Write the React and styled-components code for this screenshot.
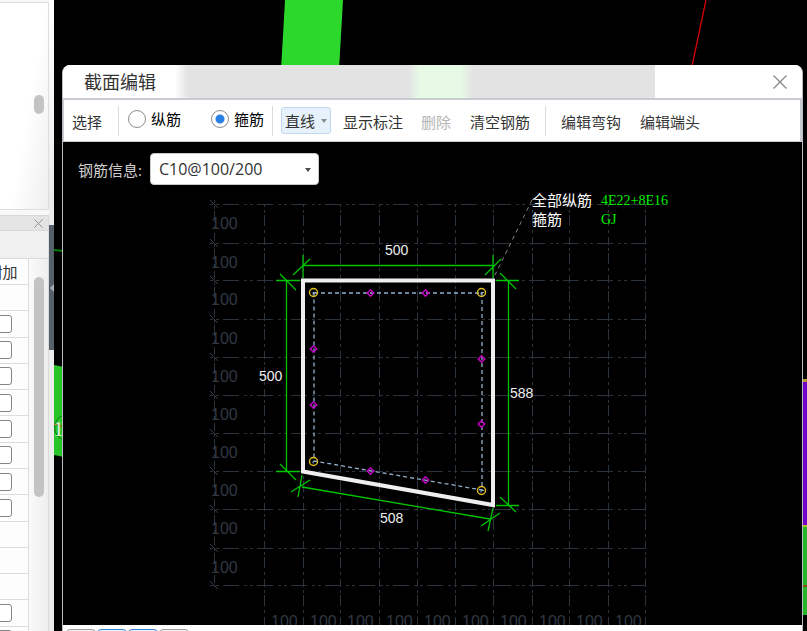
import React, { useState } from 'react';
import { styled, createGlobalStyle } from 'styled-components';

const STEPS = [0, 1, 2, 3, 4, 5, 6, 7, 8, 9, 10];
const GRID_X = [264, 303, 340, 379, 417, 455, 493, 532, 569, 608, 645];
const GRID_Y = [204, 243, 280, 319, 357, 395, 433, 471, 509, 548, 585];

const CORNER_BARS = [
  [313, 292],
  [481, 292],
  [481, 490],
  [313, 461],
];

const SIDE_BARS = [
  [370, 293],
  [425, 293],
  [313, 349],
  [313, 405],
  [481, 359],
  [481, 424],
  [370, 471],
  [425, 480],
];

// true = the row has a tick box
const ROWS = [
  false, true, true, true, true, true, true, true, true,
  false, false, false, true, true,
];

const SidePanel = () => (
  <Side>
    <SideContent>
      <UpperDock>
        <Thumb $top={92} $height={19} />
      </UpperDock>
      <DockHeader>
        <DockClose type="button" aria-label="关闭面板">
          <CrossIcon size={9} />
        </DockClose>
      </DockHeader>
      <DockToolbar />
      <DockBody>
        <TableClip>
          <PropTable>
            <thead>
              <tr>
                <th>附加</th>
              </tr>
            </thead>
            <tbody>
              {ROWS.map((hasBox, index) => (
                <tr key={index}>
                  <td>{hasBox && <CheckBox type="checkbox" aria-label="附加" />}</td>
                </tr>
              ))}
            </tbody>
          </PropTable>
        </TableClip>
        <Track>
          <Thumb $top={18} $height={220} />
        </Track>
      </DockBody>
    </SideContent>
    <Splitter>
      <SplitterHandle type="button" aria-label="收起">
        <svg width="4" height="8" viewBox="0 0 4 8">
          <path d="M4 0v8L0 4z" fill="#a9afb5" />
        </svg>
      </SplitterHandle>
    </Splitter>
  </Side>
);

const CrossIcon = ({ size }) => (
  <svg width={size} height={size} viewBox="0 0 14 14">
    <path d="M0.5 0.5l13 13M13.5 0.5l-13 13" stroke="#8a8a8a" strokeWidth="1.4" fill="none" />
  </svg>
);

const ModelView = () => (
  <Drawing aria-hidden="true">
    <path d="M231 0H289L285 70H227z" fill="#2bd82b" />
    <path d="M652 0L638 66" stroke="#d80000" strokeWidth="1.3" />
    <path d="M0 250L10 251" stroke="#007c00" strokeWidth="2" />
    <path d="M0 365L10 367V457L0 455z" fill="#28c428" />
    <path d="M10 415A13 13 0 0 0 10 440" stroke="#0a7a0a" fill="none" />
    <path d="M0 424L10 427" stroke="#c43a10" />
    <text x="-1" y="436" fill="#d8ecd8" fontFamily="Liberation Serif, serif" fontSize="22">
      1
    </text>
    <path d="M749 379h10v3h-10z" fill="#b89a20" />
    <path d="M749 382h10v143h-10z" fill="#7200cc" />
    <path d="M749 525h10v2h-10z" fill="#b4c820" />
    <path d="M749 527h10v88h-10z" fill="#28b428" />
    <path d="M749 585h10v2h-10z" fill="#8a4a10" />
  </Drawing>
);

const SectionDrawing = () => (
  <Drawing>
    <g transform="translate(-63 -142)">
      <g stroke="#2b333d" fill="none" shapeRendering="crispEdges">
        <g strokeDasharray="16 5 3 3 3 4" strokeDashoffset="19">
          {GRID_Y.map((y) => (
            <path key={y} d={`M208 ${y}.5H646`} />
          ))}
        </g>
        <g strokeDasharray="11 4 3 4 8 3 3 2" strokeDashoffset="27">
          {GRID_X.map((x) => (
            <path key={x} d={`M${x}.5 204V625`} />
          ))}
          <path d="M214.5 200V587" />
        </g>
      </g>
      <g stroke="#36404c" fill="none">
        {GRID_Y.map((y) => (
          <path key={y} d={`M210 ${y - 4}l8 8`} />
        ))}
      </g>
      <g fill="#303843" fontFamily="Liberation Sans, Arial, sans-serif" fontSize="16">
        {STEPS.slice(0, 10).map((i) => (
          <React.Fragment key={i}>
            <text x="211" y={GRID_Y[i] + 25}>100</text>
            <text x={GRID_X[i] + 7} y="627">100</text>
          </React.Fragment>
        ))}
      </g>

      <path d="M532 200L494 277" stroke="#858585" strokeDasharray="4 4" fill="none" />
      <path d="M303 280.5H493V505L303 471.5z" stroke="#f0eeee" strokeWidth="4" fill="none" />
      <path d="M314 293H482V490L314 461z" stroke="#90b0cc" strokeWidth="1.3" strokeDasharray="4 3" fill="none" />

      <g stroke="#00c400" strokeWidth="1.3" fill="none">
        <path d="M303 265.5H493M286.5 281V471M508.5 281V505M302 487L490 519" />
        <path d="M303 255V278M293 275L310 259M493 255V278M485 275L501 259" />
        <path d="M276 280.5H300M280 274L296 290M276 471.5H300M280 464L296 480" />
        <path d="M496 280.5H519M500 273L516 289M496 505.5H519M500 497L516 512" />
        <path d="M302 475L298 497M291 492L310 480M493 508L488 531M481 526L500 513" />
      </g>

      <g stroke="#e0c020" strokeWidth="1.4" fill="none">
        {CORNER_BARS.map(([x, y]) => (
          <circle key={`${x}-${y}`} cx={x + 0.5} cy={y + 0.5} r="4" />
        ))}
      </g>
      <g stroke="#90b0cc" fill="none">
        {CORNER_BARS.map(([x, y]) => (
          <path key={`${x}-${y}`} d={`M${x} ${y + 2.5}v-2h3`} />
        ))}
      </g>
      <g stroke="#c800c8" strokeWidth="1.4" fill="none">
        {SIDE_BARS.map(([x, y]) => (
          <path key={`${x}-${y}`} d={`M${x + 0.5} ${y - 3.3}l3.3 3.3l-3.3 3.3l-3.3 -3.3z`} />
        ))}
      </g>

      <g fill="#eeeeee" fontFamily="Liberation Sans, Arial, sans-serif" fontSize="14">
        <text x="385" y="255">500</text>
        <text x="259" y="381">500</text>
        <text x="510" y="398">588</text>
        <text x="380" y="523">508</text>
      </g>
      <g fill="#ffffff" fontFamily="Noto Sans CJK SC, sans-serif" fontSize="15">
        <text x="532" y="206">全部纵筋</text>
        <text x="532" y="225">箍筋</text>
      </g>
      <g fill="#00f000" fontFamily="Liberation Serif, serif" fontSize="14">
        <text x="601" y="205">4E22+8E16</text>
        <text x="601" y="224">GJ</text>
      </g>
    </g>
  </Drawing>
);

const SectionEditor = () => {
  const [barType, setBarType] = useState('stirrup');

  return (
    <Window>
      <TitleBar>
        <Title>截面编辑</Title>
        <CloseButton type="button" aria-label="关闭">
          <CrossIcon size={14} />
        </CloseButton>
      </TitleBar>

      <Toolbar>
        <ToolButton type="button">选择</ToolButton>
        <Divider $left={16} $right={9} />
        <RadioLabel>
          <Radio
            type="radio"
            name="barType"
            checked={barType === 'main'}
            onChange={() => setBarType('main')}
          />
          纵筋
        </RadioLabel>
        <RadioLabel $left={30}>
          <Radio
            type="radio"
            name="barType"
            checked={barType === 'stirrup'}
            onChange={() => setBarType('stirrup')}
          />
          箍筋
        </RadioLabel>
        <Divider $left={8} $right={8} />
        <MenuButton type="button">
          直线
          <svg width="6" height="4" viewBox="0 0 6 4">
            <path d="M0 0h6L3 4z" fill="#8c8c8c" />
          </svg>
        </MenuButton>
        <ToolButton type="button" $left={12}>显示标注</ToolButton>
        <ToolButton type="button" $left={18} disabled>删除</ToolButton>
        <ToolButton type="button" $left={19}>清空钢筋</ToolButton>
        <Divider $left={15} $right={15} />
        <ToolButton type="button">编辑弯钩</ToolButton>
        <ToolButton type="button" $left={19}>编辑端头</ToolButton>
      </Toolbar>

      <Canvas>
        <SectionDrawing />
        <InfoForm>
          <label htmlFor="barInfo">钢筋信息:</label>
          <SelectWrap>
            <Select id="barInfo" defaultValue="C10@100/200">
              <option>C10@100/200</option>
            </Select>
            <svg width="6" height="4" viewBox="0 0 6 4">
              <path d="M0 0h6L3 4z" fill="#4a4a4a" />
            </svg>
          </SelectWrap>
        </InfoForm>
      </Canvas>

      <StatusBar>
        <StatusButton type="button" aria-label="动态输入" />
        <StatusButton type="button" aria-label="正交" $active />
        <StatusButton type="button" aria-label="对象捕捉" $active />
        <StatusButton type="button" aria-label="极轴" />
      </StatusBar>
    </Window>
  );
};

const App = () => (
  <>
    <GlobalStyle />
    <Page>
      <SidePanel />
      <Desktop>
        <ModelView />
        <SectionEditor />
      </Desktop>
    </Page>
  </>
);

export default App;

const GlobalStyle = createGlobalStyle`
  * {
    box-sizing: border-box;
  }

  body {
    margin: 0;
    overflow: hidden;
    font-family: 'Open Sans', 'Noto Sans CJK SC', sans-serif;
    font-size: 15px;
    color: #333;
  }

  button {
    padding: 0;
    border: none;
    background: none;
    font: inherit;
    color: inherit;
  }
`;

const Page = styled.div`
  display: flex;
  height: 100vh;
  background: #000;
`;

const Side = styled.aside`
  display: flex;
  flex: none;
  width: 54px;
  background: #f8f8f8;
`;

const SideContent = styled.div`
  display: flex;
  flex-direction: column;
  flex: 1;
  min-width: 0;
  padding-top: 2px;
`;

const UpperDock = styled.div`
  display: flex;
  justify-content: flex-end;
  flex: none;
  height: 208px;
  padding-right: 4px;
  border: solid #dedede;
  border-width: 1px 1px 1px 0;
  background: linear-gradient(100deg, #fff 55%, #efefef);
`;

const Thumb = styled.div`
  width: 10px;
  height: ${({ $height }) => $height}px;
  margin-top: ${({ $top }) => $top}px;
  border-radius: 5px;
  background: #c3c3c3;
`;

const DockHeader = styled.div`
  display: flex;
  align-items: center;
  justify-content: flex-end;
  flex: none;
  height: 16px;
  margin-top: 5px;
  padding-right: 5px;
  border: solid #d8d8d8;
  border-width: 1px 1px 1px 0;
  background: #e4e4e4;
`;

const DockClose = styled.button`
  display: flex;
`;

const DockToolbar = styled.div`
  flex: none;
  height: 28px;
  border-right: 1px solid #dedede;
  border-bottom: 1px solid #dcdcdc;
  background: #f0f0f0;
`;

const DockBody = styled.div`
  display: flex;
  flex: 1;
  min-height: 0;
  overflow: hidden;
`;

const TableClip = styled.div`
  display: flex;
  justify-content: flex-end;
  align-items: flex-start;
  flex: 1;
  min-width: 0;
  overflow: hidden;
`;

const PropTable = styled.table`
  flex: none;
  width: 52px;
  height: 394px;
  border-collapse: separate;
  border-spacing: 0;
  background: #fdfdfd;

  th,
  td {
    height: 26px;
    padding: 0;
    border-right: 1px solid #dcdcdc;
    border-bottom: 1px solid #dcdcdc;
    font-size: 15px;
    font-weight: 400;
    line-height: 20px;
    text-align: center;
    white-space: nowrap;
  }
`;

const CheckBox = styled.input`
  appearance: none;
  display: block;
  width: 18px;
  height: 18px;
  margin: 0 auto;
  border: 1px solid #858585;
  border-radius: 3px;
  background: #fff;
`;

const Track = styled.div`
  display: flex;
  justify-content: flex-end;
  align-items: flex-start;
  flex: none;
  width: 20px;
  padding-right: 4px;
  border-right: 1px solid #dadada;
  background: linear-gradient(90deg, #fafafa, #eeeeee);
`;

const Splitter = styled.div`
  flex: none;
  width: 5px;
  padding-top: 225px;
  background: linear-gradient(#fff, #ececec 30%);
`;

const SplitterHandle = styled.button`
  display: flex;
  align-items: center;
  justify-content: flex-end;
  width: 5px;
  height: 125px;
  background: #56606b;
`;

const Desktop = styled.main`
  position: relative;
  flex: 1;
  min-width: 0;
  overflow: hidden;
  background: #000;
`;

const Drawing = styled.svg`
  position: absolute;
  inset: 0;
  width: 100%;
  height: 100%;
`;

const Window = styled.section`
  position: absolute;
  top: 65px;
  right: 4px;
  bottom: -30px;
  left: 8px;
  display: flex;
  flex-direction: column;
  overflow: hidden;
  border: solid #b9bcc0;
  border-width: 0 1px 0 1px;
  border-radius: 8px 8px 0 0;
  background: #fff;
`;

const TitleBar = styled.header`
  display: flex;
  align-items: center;
  justify-content: space-between;
  flex: none;
  height: 35px;
  padding: 0 15px 0 21px;
  border-bottom: 2px solid #c8ccd1;
  background: linear-gradient(
    90deg,
    #fff 112px,
    #e3e3e3 125px,
    #e3e3e3 346px,
    #e6fae6 357px,
    #e6fae6 398px,
    #e3e3e3 410px,
    #e3e3e3 592px,
    #fff 592px
  );
`;

const Title = styled.h1`
  margin: 0;
  font-size: 18px;
  font-weight: 400;
  line-height: 24px;
`;

const CloseButton = styled.button`
  display: flex;
`;

const Toolbar = styled.div`
  display: flex;
  align-items: center;
  flex: none;
  height: 42px;
  padding-left: 8px;
  border: solid #c8ccd1;
  border-width: 0 2px 1px 1px;
  white-space: nowrap;
`;

const ToolButton = styled.button`
  margin-left: ${({ $left = 0 }) => $left}px;
  padding-top: 2px;
  line-height: 20px;

  &:disabled {
    color: #b4b4b4;
  }
`;

const Divider = styled.span`
  width: 1px;
  height: 30px;
  margin: 0 ${({ $right }) => $right}px 0 ${({ $left }) => $left}px;
  background: #dcdcdc;
`;

const RadioLabel = styled.label`
  display: flex;
  align-items: center;
  gap: 5px;
  margin-left: ${({ $left = 0 }) => $left}px;
  padding-bottom: 3px;
  line-height: 20px;
  color: #000;
`;

const Radio = styled.input`
  appearance: none;
  width: 18px;
  height: 18px;
  margin: 0;
  border: 1px solid #8c8c8c;
  border-radius: 50%;
  background: #fff;

  &:checked {
    background: radial-gradient(circle, #2a7de1 4px, #fff 5px);
  }
`;

const MenuButton = styled.button`
  display: flex;
  align-items: center;
  justify-content: space-between;
  width: 50px;
  height: 27px;
  padding: 0 3px;
  border: 1px solid #c0d8f0;
  border-radius: 3px;
  background: #e6f1fc;
`;

const Canvas = styled.div`
  position: relative;
  flex: 1;
  min-height: 0;
  overflow: hidden;
  background: #000;
`;

const InfoForm = styled.form`
  position: relative;
  display: flex;
  align-items: center;
  gap: 8px;
  padding: 11px 0 0 15px;
  color: #d0d0d0;
`;

const SelectWrap = styled.div`
  position: relative;
  display: flex;

  svg {
    position: absolute;
    top: 15px;
    right: 8px;
    pointer-events: none;
  }
`;

const Select = styled.select`
  appearance: none;
  width: 169px;
  height: 32px;
  padding: 0 24px 0 8px;
  border: 1px solid #c8c8c8;
  border-radius: 4px;
  background: #fff;
  font-family: inherit;
  font-size: 16px;
  color: #333;
`;

const StatusBar = styled.footer`
  display: flex;
  gap: 1px;
  flex: none;
  height: 36px;
  padding: 4px 3px;
  background: #fff;
`;

const StatusButton = styled.button`
  width: 30px;
  height: 28px;
  border: 1px solid ${({ $active }) => ($active ? '#3c82dc' : '#9c9c9c')};
  border-radius: 4px;
  background: ${({ $active }) => ($active ? '#e6f1fc' : '#f4f4f4')};
`;
